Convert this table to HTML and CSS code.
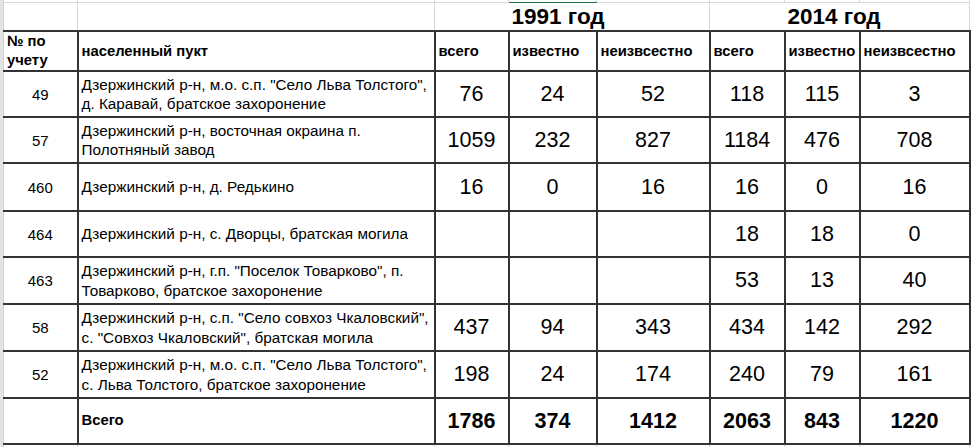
FILE: index.html
```html
<!DOCTYPE html>
<html lang="ru">
<head>
<meta charset="utf-8">
<title>Захоронения</title>
<link rel="stylesheet" href="styles.css">
</head>
<body>
<div class="sheet">
<table class="grid">
<colgroup>
<col class="w-num"><col class="w-place"><col class="w-a"><col class="w-b"><col class="w-c"><col class="w-d"><col class="w-e"><col class="w-f">
</colgroup>
<tr class="r-top">
<td></td><td></td><td></td><td class="sel"></td><td></td><td></td><td></td><td></td>
</tr>
<tr class="r-year">
<td></td><td></td><td class="no-r"></td><td class="year no-l no-r">1991 год</td><td class="no-l"></td><td class="no-r"></td><td class="year no-l no-r">2014 год</td><td class="no-l"></td>
</tr>
<tr class="r-head">
<td class="h h-num">№ по<br>учету</td>
<td class="h">населенный пукт</td>
<td class="h">всего</td>
<td class="h">известно</td>
<td class="h">неизвсестно</td>
<td class="h">всего</td>
<td class="h">известно</td>
<td class="h">неизвсестно</td>
</tr>
<tr class="r-46">
<td class="id">49</td>
<td class="place">Дзержинский р-н, м.о. с.п. "Село Льва Толстого",<br>д. Каравай, братское захоронение</td>
<td class="n">76</td><td class="n">24</td><td class="n">52</td><td class="n">118</td><td class="n">115</td><td class="n">3</td>
</tr>
<tr class="r-46">
<td class="id">57</td>
<td class="place">Дзержинский р-н, восточная окраина п.<br>Полотняный завод</td>
<td class="n">1059</td><td class="n">232</td><td class="n">827</td><td class="n">1184</td><td class="n">476</td><td class="n">708</td>
</tr>
<tr class="r-48">
<td class="id">460</td>
<td class="place single">Дзержинский р-н, д. Редькино</td>
<td class="n">16</td><td class="n">0</td><td class="n">16</td><td class="n">16</td><td class="n">0</td><td class="n">16</td>
</tr>
<tr class="r-46">
<td class="id">464</td>
<td class="place single">Дзержинский р-н, с. Дворцы, братская могила</td>
<td class="n"></td><td class="n"></td><td class="n"></td><td class="n">18</td><td class="n">18</td><td class="n">0</td>
</tr>
<tr class="r-47">
<td class="id">463</td>
<td class="place">Дзержинский р-н, г.п. "Поселок Товарково", п.<br>Товарково, братское захоронение</td>
<td class="n"></td><td class="n"></td><td class="n"></td><td class="n">53</td><td class="n">13</td><td class="n">40</td>
</tr>
<tr class="r-47">
<td class="id">58</td>
<td class="place">Дзержинский р-н, с.п. "Село совхоз Чкаловский",<br>с. "Совхоз Чкаловский", братская могила</td>
<td class="n">437</td><td class="n">94</td><td class="n">343</td><td class="n">434</td><td class="n">142</td><td class="n">292</td>
</tr>
<tr class="r-47">
<td class="id">52</td>
<td class="place">Дзержинский р-н, м.о. с.п. "Село Льва Толстого",<br>с. Льва Толстого, братское захоронение</td>
<td class="n">198</td><td class="n">24</td><td class="n">174</td><td class="n">240</td><td class="n">79</td><td class="n">161</td>
</tr>
<tr class="r-46">
<td class="id"></td>
<td class="place single total-label">Всего</td>
<td class="n b">1786</td><td class="n b">374</td><td class="n b">1412</td><td class="n b">2063</td><td class="n b">843</td><td class="n b">1220</td>
</tr>
<tr class="r-end">
<td></td><td></td><td></td><td></td><td></td><td></td><td></td><td></td>
</tr>
</table>
</div>
</body>
</html>
```

FILE: styles.css
```css
html, body {
  margin: 0;
  padding: 0;
  background: #ffffff;
}

.sheet {
  width: 974px;
  height: 447px;
  overflow: hidden;
  padding-left: 3px;
  box-sizing: border-box;
  background: linear-gradient(to right, #e3e3e3 0, #e3e3e3 3px, #ffffff 3px);
  font-family: "Liberation Sans", Arial, sans-serif;
  color: #000;
}

.grid {
  border-collapse: collapse;
  table-layout: fixed;
  width: 966px;
}

.w-num { width: 74px; }
.w-place { width: 357px; }
.w-a { width: 74px; }
.w-b { width: 88px; }
.w-c { width: 113px; }
.w-d { width: 75px; }
.w-e { width: 75px; }
.w-f { width: 110px; }

.grid td {
  padding: 0 3px;
  border: 2px solid #333333;
  white-space: nowrap;
  overflow: visible;
  vertical-align: middle;
}

.grid td:first-child {
  border-left: 1px solid #d0d0d0;
}

.r-top td {
  height: 2px;
  padding: 0;
  font-size: 0;
  line-height: 0;
  border: 1px solid #d8d8d8;
  border-top: none;
}

.r-top td.sel {
  border-bottom: 1px solid #217346;
}

.r-year td {
  height: 27px;
  padding: 0 3px;
  border: 1px solid #d8d8d8;
  border-bottom: 2px solid #333333;
}

.r-year td.no-r { border-right: hidden; }
.r-year td.no-l { border-left: hidden; }

.year {
  font-size: 22.5px;
  font-weight: bold;
  line-height: 25px;
  vertical-align: bottom;
  padding-bottom: 0;
}

.r-head td { height: 37px; }
.r-46 td { height: 44px; }
.r-47 td { height: 45px; }
.r-48 td { height: 46px; }

.h {
  font-size: 14.8px;
  font-weight: bold;
  line-height: 19px;
}

.h-num {
  padding-left: 4px;
}

.id {
  font-size: 15px;
  text-align: center;
}

.place {
  font-size: 15.3px;
  line-height: 19.5px;
  padding-left: 3px;
  padding-top: 4px;
}

.place.single {
  padding-top: 0;
}

.total-label {
  font-weight: bold;
  font-size: 14.8px;
}

.n {
  font-size: 21.5px;
  text-align: center;
}

.n.b {
  font-weight: bold;
}

.r-end td {
  height: 4px;
  padding: 0;
  border: 1px solid #d8d8d8;
  border-top: 2px solid #333333;
  border-bottom: none;
}
```
